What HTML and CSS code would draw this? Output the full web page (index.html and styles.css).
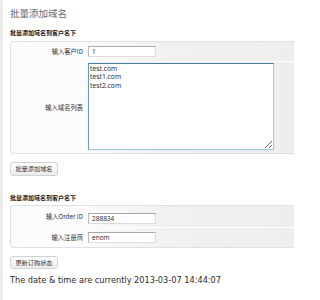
FILE: index.html
```html
<!DOCTYPE html>
<html>
<head>
<meta charset="utf-8">
<link rel="stylesheet" href="styles.css">
</head>
<body>
<div class="page">
  <div class="wrap">
    <h2 class="title">批量添加域名</h2>
    <h3 class="sub">批量添加域名到客户名下</h3>
    <table class="form-table t1">
      <tr>
        <th>输入客户ID</th>
        <td><input class="field" type="text" value="1"></td>
      </tr>
      <tr class="area-row">
        <th>输入域名列表</th>
        <td><textarea class="area">test.com
test1.com
test2.com</textarea></td>
      </tr>
    </table>
    <button class="btn">批量添加域名</button>

    <h3 class="sub sub2">批量添加域名到客户名下</h3>
    <table class="form-table t2">
      <tr>
        <th>输入Order ID</th>
        <td><input class="field" type="text" value="288834"></td>
      </tr>
      <tr>
        <th>输入注册商</th>
        <td><input class="field" type="text" value="enom"></td>
      </tr>
    </table>
    <button class="btn btn2">更新订购状态</button>
    <p class="date">The date &amp; time are currently 2013-03-07 14:44:07</p>
  </div>
</div>
</body>
</html>
```
FILE: styles.css
```css
html, body {
  margin: 0;
  padding: 0;
  background: #ffffff;
  overflow: hidden;
}
body {
  font-family: "Noto Sans CJK SC", "DejaVu Sans", sans-serif;
  color: #333;
}
.page {
  width: 294px;
  height: 300px;
  border-left: 3px solid #ececec;
  box-sizing: border-box;
  overflow: hidden;
}
.wrap {
  padding-left: 7px;
}
.title {
  margin: 0;
  padding-top: 7px;
  height: 22px;
  font-size: 9.5px;
  font-weight: normal;
  line-height: 12px;
  color: #6a6a6a;
  box-sizing: border-box;
}
.sub {
  margin: 0;
  font-size: 6px;
  font-weight: bold;
  line-height: 8px;
  height: 8px;
  color: #222;
}
.title + .sub {
  margin-top: 7px;
}
.sub2 {
  margin-top: 18px;
}
.form-table {
  border-collapse: separate;
  border-spacing: 0;
  width: 100%;
  border: 1px solid #e0e0e0;
  border-right: none;
  border-radius: 4px 0 0 4px;
  background: linear-gradient(to right, #fcfcfc 0, #fbfbfb 76px, #f1f1f1 150px, #eeeeee 100%);
}
.t1 {
  margin-top: 4px;
}
.t2 {
  margin-top: 3px;
}
.form-table th {
  width: 72px;
  padding: 0 5px 0 0;
  text-align: right;
  font-size: 6.3px;
  font-weight: normal;
  color: #333;
  border-bottom: 1px solid #ffffff;
  vertical-align: middle;
}
.form-table td {
  padding: 4px 0;
  border-bottom: 1px solid #ffffff;
}
.form-table tr:last-child th,
.form-table tr:last-child td {
  border-bottom: none;
}
.t1 .area-row td {
  padding: 1px 0 3px 0;
}
.t2 tr:first-child td {
  padding: 7px 0 3px 0;
}
.field {
  display: block;
  box-sizing: border-box;
  width: 68px;
  height: 11px;
  margin: 0;
  padding: 0 3px;
  border: 1px solid #dcdcdc;
  border-top-color: #a8a8a8;
  border-left-color: #bcbcbc;
  background: #fff;
  font-family: "Open Sans", "DejaVu Sans", sans-serif;
  font-size: 6.5px;
  line-height: 9px;
  color: #222;
  outline: none;
}
.area {
  display: block;
  box-sizing: border-box;
  width: 186px;
  height: 87px;
  margin: 0;
  padding: 1px 1px;
  border: 1px solid #9ccbe0;
  border-top-color: #4f7c9a;
  border-left-color: #6e9bb8;
  box-shadow: 0 0 1px #bfe0ee;
  background: #fff;
  font-family: "Open Sans", "DejaVu Sans", sans-serif;
  font-size: 6.8px;
  line-height: 8.4px;
  color: #222;
  resize: both;
  outline: none;
}
.btn {
  display: block;
  box-sizing: border-box;
  width: 48px;
  height: 14px;
  margin: 8px 0 0 0;
  padding: 0;
  border: 1px solid #d2d2d2;
  border-radius: 3px;
  background: linear-gradient(#fefefe, #ececec);
  font-family: "Noto Sans CJK SC", sans-serif;
  font-size: 6.2px;
  line-height: 12px;
  color: #333;
  text-align: center;
}
.btn2 {
  height: 13px;
}
.date {
  margin: 6px 0 0 0;
  font-family: "DejaVu Sans", sans-serif;
  font-size: 8.2px;
  line-height: 10px;
  color: #2a2a2a;
}
```
